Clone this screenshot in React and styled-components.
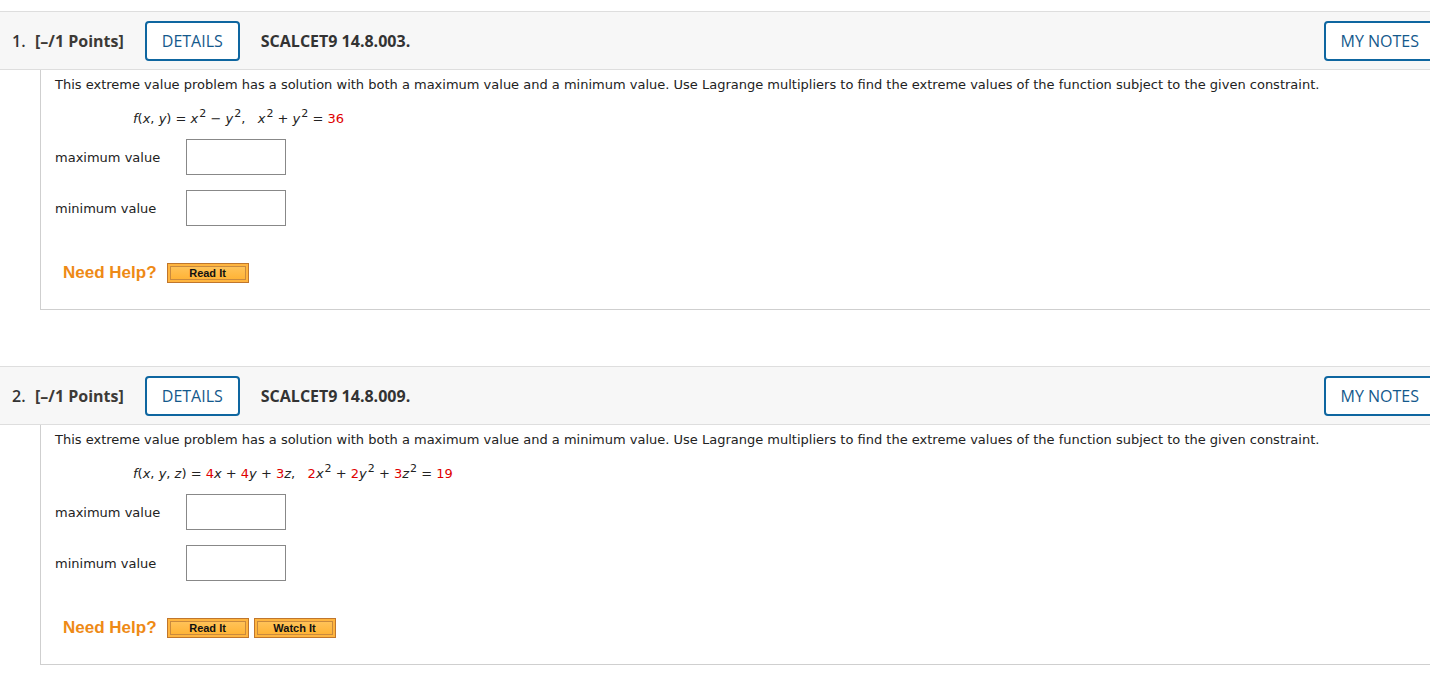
import React from 'react';
import styled, { createGlobalStyle } from 'styled-components';

const GlobalStyle = createGlobalStyle`
  html, body {
    margin: 0;
    padding: 0;
    background: #ffffff;
    overflow: hidden;
  }
  body {
    font-family: "DejaVu Sans", Verdana, sans-serif;
    color: #222;
  }
`;

const Page = styled.div`
  padding-top: 11px;
  width: 1430px;
`;

const Question = styled.section`
  & + & {
    margin-top: 56px;
  }
`;

const Header = styled.div`
  display: flex;
  align-items: center;
  height: 57px;
  background: #f7f7f7;
  border-top: 1px solid #dedede;
  border-bottom: 1px solid #dedede;
  padding-left: 12px;
  font-family: "Open Sans", sans-serif;
  font-size: 16px;
  color: #333;
`;

const Number = styled.span`
  font-weight: 600;
  width: 23px;
`;

const Points = styled.span`
  font-weight: 700;
  color: #3d3a36;
  margin-right: 21px;
`;

const OutlineButton = styled.button`
  font-family: "Open Sans", sans-serif;
  font-size: 16px;
  color: #14598c;
  background: #fff;
  border: 2px solid #0e66a0;
  border-radius: 4px;
  height: 40px;
  padding: 0 15px;
  margin-right: ${p => p.$edge ? '-6px' : '21px'};
  margin-left: ${p => p.$edge ? 'auto' : '0'};
`;

const Code = styled.span`
  font-weight: 700;
  color: #333;
`;

const Body = styled.div`
  margin-left: 40px;
  border-left: 1px solid #cfcfcf;
  border-bottom: 1px solid #cfcfcf;
  padding: 7px 0 0 14px;
  height: 232px;
  font-size: 13px;
  color: #222;
`;

const Prompt = styled.p`
  margin: 0;
  line-height: 16px;
`;

const Formula = styled.div`
  margin: 18px 0 0 78px;
  line-height: 16px;
  font-size: 13px;
  color: #222;

  i { font-style: italic; }
  sup {
    font-size: 11px;
    vertical-align: 6px;
    line-height: 0;
    margin-left: 1px;
  }
`;

const Red = styled.span`
  color: #e00000;
`;

const FieldRow = styled.div`
  display: flex;
  align-items: center;
  margin-top: ${p => p.$first ? '12px' : '15px'};
`;

const Label = styled.label`
  width: 131px;
  font-size: 13px;
  color: #222;
`;

const AnswerBox = styled.input`
  width: 98px;
  height: 34px;
  border: 1px solid #888;
  padding: 0;
  margin: 0;
  box-sizing: content-box;
`;

const HelpRow = styled.div`
  display: flex;
  align-items: center;
  gap: 5px;
  margin: 37px 0 0 8px;
`;

const HelpText = styled.span`
  font-family: "Liberation Sans", Arial, sans-serif;
  font-weight: 700;
  font-size: 17px;
  color: #ee8a16;
  margin-right: 5px;
`;

const HelpButton = styled.button`
  font-family: "Liberation Sans", Arial, sans-serif;
  font-weight: 700;
  font-size: 11px;
  color: #111;
  width: 82px;
  height: 20px;
  padding: 0;
  border: 1px solid #c0762c;
  background: #ffb53f;
  box-shadow: inset 0 0 0 2px #ffb53f, inset 0 0 0 3px #c98a3e;
  background-image: linear-gradient(#ffc660, #ffb02e);
`;

const problems = [
  {
    n: '1.',
    code: 'SCALCET9 14.8.003.',
    formula: (
      <>
        <i>f</i>(<i>x</i>, <i>y</i>) = <i>x</i><sup>2</sup> − <i>y</i><sup>2</sup>,&nbsp;&nbsp; <i>x</i><sup>2</sup> + <i>y</i><sup>2</sup> = <Red>36</Red>
      </>
    ),
    help: ['Read It'],
  },
  {
    n: '2.',
    code: 'SCALCET9 14.8.009.',
    formula: (
      <>
        <i>f</i>(<i>x</i>, <i>y</i>, <i>z</i>) = <Red>4</Red><i>x</i> + <Red>4</Red><i>y</i> + <Red>3</Red><i>z</i>,&nbsp;&nbsp; <Red>2</Red><i>x</i><sup>2</sup> + <Red>2</Red><i>y</i><sup>2</sup> + <Red>3</Red><i>z</i><sup>2</sup> = <Red>19</Red>
      </>
    ),
    help: ['Read It', 'Watch It'],
  },
];

const App = () => {
  return (
    <Page>
      <GlobalStyle />
      {problems.map(p => (
        <Question key={p.n}>
          <Header>
            <Number>{p.n}</Number>
            <Points>[–/1 Points]</Points>
            <OutlineButton>DETAILS</OutlineButton>
            <Code>{p.code}</Code>
            <OutlineButton $edge>MY NOTES</OutlineButton>
          </Header>
          <Body>
            <Prompt>
              This extreme value problem has a solution with both a maximum value and a minimum value. Use Lagrange multipliers to find the extreme values of the function subject to the given constraint.
            </Prompt>
            <Formula>{p.formula}</Formula>
            <FieldRow $first>
              <Label>maximum value</Label>
              <AnswerBox type="text" />
            </FieldRow>
            <FieldRow>
              <Label>minimum value</Label>
              <AnswerBox type="text" />
            </FieldRow>
            <HelpRow>
              <HelpText>Need Help?</HelpText>
              {p.help.map(h => (
                <HelpButton key={h}>{h}</HelpButton>
              ))}
            </HelpRow>
          </Body>
        </Question>
      ))}
    </Page>
  );
};

export default App;
